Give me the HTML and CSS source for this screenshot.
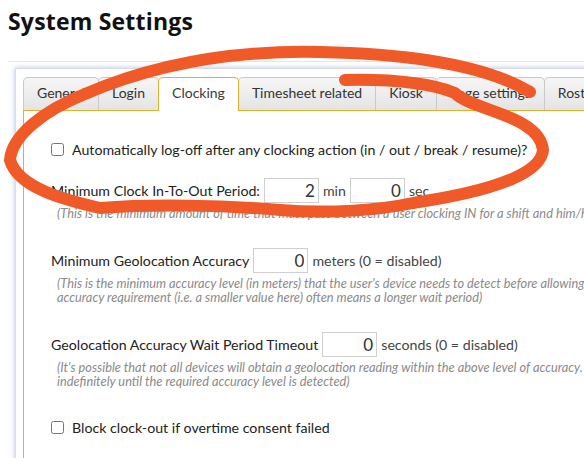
FILE: index.html
```html
<!DOCTYPE html>
<html lang="en">
<head>
<meta charset="utf-8">
<title>System Settings</title>
<link rel="stylesheet" href="styles.css">
</head>
<body>
<h1 class="title">System Settings</h1>
<div class="panel">
  <ul class="tabs">
    <li class="tab">General</li>
    <li class="tab">Login</li>
    <li class="tab active">Clocking</li>
    <li class="tab">Timesheet related</li>
    <li class="tab">Kiosk</li>
    <li class="tab">Page settings</li>
    <li class="tab">Rostering</li>
  </ul>
  <div class="tab-body">
    <label class="row check-row"><input type="checkbox" class="check"><span>Automatically log-off after any clocking action (in / out / break / resume)?</span></label>

    <div class="setting first">
      <div class="row">
        <span class="label">Minimum Clock In-To-Out Period:</span>
        <input class="num" type="text" value="2">
        <span class="unit">min</span>
        <input class="num" type="text" value="0">
        <span class="unit">sec</span>
      </div>
      <p class="help">(This is the minimum amount of time that must pass between a user clocking IN for a shift and him/her clocking OUT)</p>
    </div>

    <div class="setting">
      <div class="row">
        <span class="label">Minimum Geolocation Accuracy</span>
        <input class="num" type="text" value="0">
        <span class="unit">meters (0 = disabled)</span>
      </div>
      <p class="help">(This is the minimum accuracy level (in meters) that the user's device needs to detect before allowing them to clock. A higher<br>accuracy requirement (i.e. a smaller value here) often means a longer wait period)</p>
    </div>

    <div class="setting">
      <div class="row">
        <span class="label">Geolocation Accuracy Wait Period Timeout</span>
        <input class="num" type="text" value="0">
        <span class="unit">seconds (0 = disabled)</span>
      </div>
      <p class="help">(It's possible that not all devices will obtain a geolocation reading within the above level of accuracy. This timeout avoids waiting<br>indefinitely until the required accuracy level is detected)</p>
    </div>

    <label class="row check-row last"><input type="checkbox" class="check"><span>Block clock-out if overtime consent failed</span></label>
  </div>
</div>

<svg class="scribble" width="584" height="458" viewBox="0 0 584 458" aria-hidden="true">
  <path d="M345 80 C395 79 430 83 455 93 C470 110 540 115 543 150 C541 172 500 190 413 203 C380 210 330 214 280 210 C220 205 150 204 100 208 C65 200 18 188 10 160 C12 135 45 110 85 94 C150 66 230 50 320 52 C420 54 490 68 530 92" fill="none" stroke="#f05a28" stroke-width="12" stroke-linecap="round" stroke-linejoin="round"/>
</svg>
</body>
</html>
```

FILE: styles.css
```css
html, body {
  overflow: hidden;
}

body {
  margin: 0;
  padding: 0 0 0 8px;
  width: 1100px;
  background: #ffffff;
  font-family: Lato, "Open Sans", Arial, sans-serif;
  color: #222;
}

.title {
  margin: 0;
  padding: 7px 0 26px 0;
  font-family: "Open Sans", Lato, sans-serif;
  font-weight: 700;
  font-size: 23px;
  letter-spacing: 0.2px;
  line-height: 28px;
  color: #111;
  border-bottom: 1px solid #e6e6e6;
}

.panel {
  margin: 6px 0 0 7px;
  padding: 8px 0 0 7px;
  border: 1px solid #d9dde3;
  border-right: none;
  box-shadow: 0 0 5px rgba(110, 150, 215, 0.55);
  background: #fff;
  height: 600px;
}

.tabs {
  list-style: none;
  margin: 0;
  padding: 0;
  display: flex;
  height: 33px;
  position: relative;
  z-index: 1;
}

.tab {
  padding: 0 13px;
  height: 32px;
  line-height: 29px;
  font-size: 14px;
  color: #333;
  border: 1px solid #c9c9c9;
  border-bottom: none;
  border-radius: 5px 5px 0 0;
  background: linear-gradient(#f6f6f6, #e4e4e4);
  margin-left: -1px;
  white-space: nowrap;
}

.tab:first-child {
  margin-left: 0;
}

.tab.active {
  background: #fff;
  border-color: #e4b02c;
  height: 33px;
  color: #3a3a3a;
  position: relative;
  z-index: 2;
}

.tab-body {
  border-top: 1px solid #e4b02c;
  border-left: 1px solid #e4b02c;
  padding: 26px 0 0 27px;
  min-height: 500px;
}

.row {
  display: flex;
  align-items: center;
  gap: 4px;
  height: 25px;
  font-size: 14.2px;
  color: #222;
  white-space: nowrap;
}

.check-row {
  gap: 8px;
}

.check {
  margin: 0;
  width: 13px;
  height: 13px;
}

.setting {
  margin-top: 28px;
}

.setting.first {
  margin-top: 16px;
}

.check-row.last {
  margin-top: 27px;
}

.label {
  color: #222;
}

.unit {
  color: #444;
}

.num {
  box-sizing: border-box;
  width: 55px;
  height: 25px;
  margin: 0;
  padding: 0 3px 0 0;
  border: 1px solid #cfcfcf;
  font-family: Lato, sans-serif;
  font-size: 17px;
  color: #333;
  text-align: right;
}

.help {
  margin: 3px 0 0 6px;
  font-size: 12.8px;
  line-height: 14px;
  font-style: italic;
  color: #8a8a8a;
  white-space: nowrap;
}

.scribble {
  position: absolute;
  top: 0;
  left: 0;
  z-index: 10;
  pointer-events: none;
}
```
